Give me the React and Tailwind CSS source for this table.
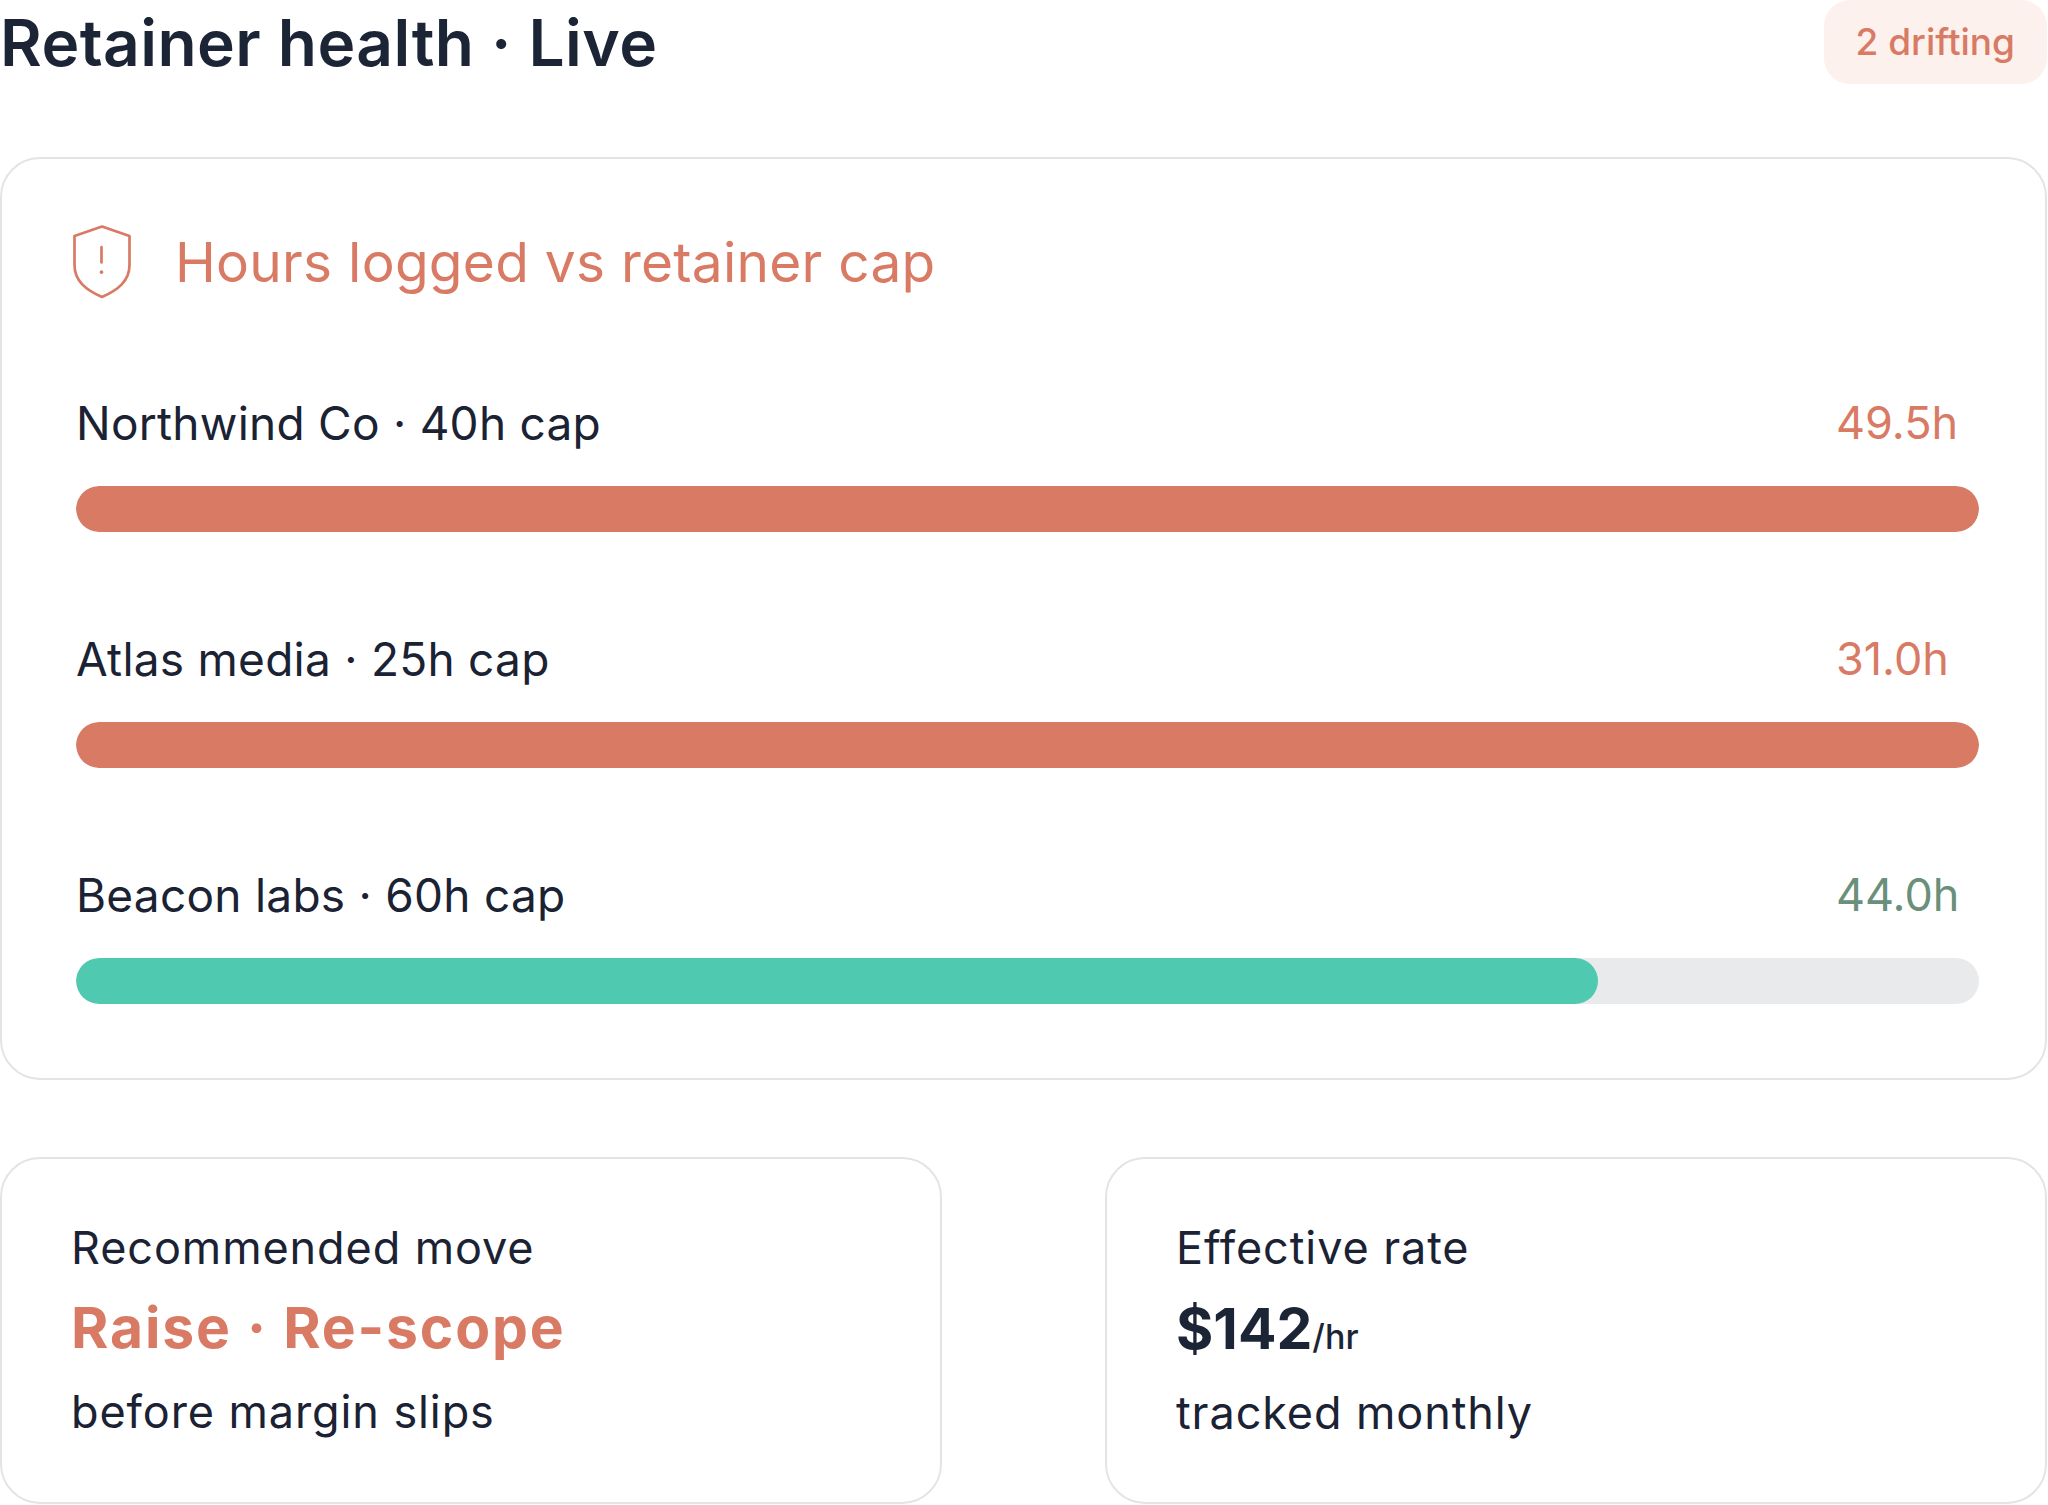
import React from "react";

const rows = [
  { label: "Northwind Co · 40h cap", value: "49.5h", pct: 100, over: true },
  { label: "Atlas media · 25h cap", value: "31.0h", pct: 100, over: true },
  { label: "Beacon labs · 60h cap", value: "44.0h", pct: 80, over: false },
];

const ShieldAlert = () => (
  <svg
    width="58"
    height="74"
    viewBox="0 0 58 74"
    fill="none"
    stroke="#d97a64"
    strokeWidth="2.7"
    strokeLinecap="round"
    strokeLinejoin="round"
  >
    <path d="M29 1.5 L56.5 11 V40 C56.5 56 45 65 29 72 C13 65 1.5 56 1.5 40 V11 Z" />
    <path d="M28.5 22 V37.5" />
    <path d="M28.5 47 V47.2" strokeWidth="3.6" />
  </svg>
);

const HoursRow = ({ row }) => (
  <div className="flex flex-col">
    <div className="flex items-start justify-between">
      <span className="text-[46px] leading-none tracking-[0.25px] text-[#1a2233]">{row.label}</span>
      <span
        className={`w-[143px] text-[45px] leading-none ${
          row.over ? "text-[#d97a64]" : "text-[#6a8f7b]"
        }`}
      >
        {row.value}
      </span>
    </div>
    <div className="mt-[40px] h-[46px] w-full overflow-hidden rounded-full bg-[#e9eaec]">
      <div
        className={`h-full rounded-full ${row.over ? "bg-[#d87a64]" : "bg-[#4fc9b0]"}`}
        style={{ width: `${row.pct}%` }}
      />
    </div>
  </div>
);

const App = () => {
  return (
    <div className="w-[2047px] bg-white font-['Inter','Noto_Sans',sans-serif]">
      <div className="flex items-start justify-between">
        <h1 className="pt-[11px] text-[64px] font-semibold leading-none tracking-[0.45px] text-[#1c2536]">
          Retainer health · Live
        </h1>
        <div className="flex h-[84px] items-center rounded-[26px] bg-[#fcf1ec] px-[32px] text-[37px] font-medium text-[#d97a64]">
          2 drifting
        </div>
      </div>

      <div className="mt-[73px] rounded-[40px] border-2 border-[#e4e4e4] pl-[74px] pr-[66px] pt-[66px] pb-[74px]">
        <div className="-ml-[3px] flex items-center gap-[44px]">
          <ShieldAlert />
          <h2 className="text-[55px] leading-none tracking-[0.25px] text-[#d97a64]">
            Hours logged vs retainer cap
          </h2>
        </div>

        <div className="mt-[101px] flex flex-col gap-[104px]">
          {rows.map((row) => (
            <HoursRow key={row.label} row={row} />
          ))}
        </div>
      </div>

      <div className="mt-[77px] grid grid-cols-2 gap-[163px]">
        <div className="h-[347px] rounded-[40px] border-2 border-[#e4e4e4] pl-[69px] pt-[66px]">
          <p className="text-[45px] leading-none tracking-[0.02em] text-[#1a2233]">Recommended move</p>
          <p className="mt-[29px] text-[57px] font-bold leading-none tracking-[0.032em] text-[#d97a64]">
            Raise · Re-scope
          </p>
          <p className="mt-[33px] text-[45px] leading-none tracking-[0.02em] text-[#1a2233]">
            before margin slips
          </p>
        </div>
        <div className="h-[347px] rounded-[40px] border-2 border-[#e4e4e4] pl-[69px] pt-[66px]">
          <p className="text-[45px] leading-none tracking-[0.02em] text-[#1a2233]">Effective rate</p>
          <p className="mt-[30px] flex items-baseline leading-none text-[#1c2536]">
            <span className="text-[57px] font-bold">$142</span>
            <span className="text-[34px] font-medium">/hr</span>
          </p>
          <p className="mt-[33px] text-[45px] leading-none tracking-[0.02em] text-[#1a2233]">
            tracked monthly
          </p>
        </div>
      </div>
    </div>
  );
};

export default App;
